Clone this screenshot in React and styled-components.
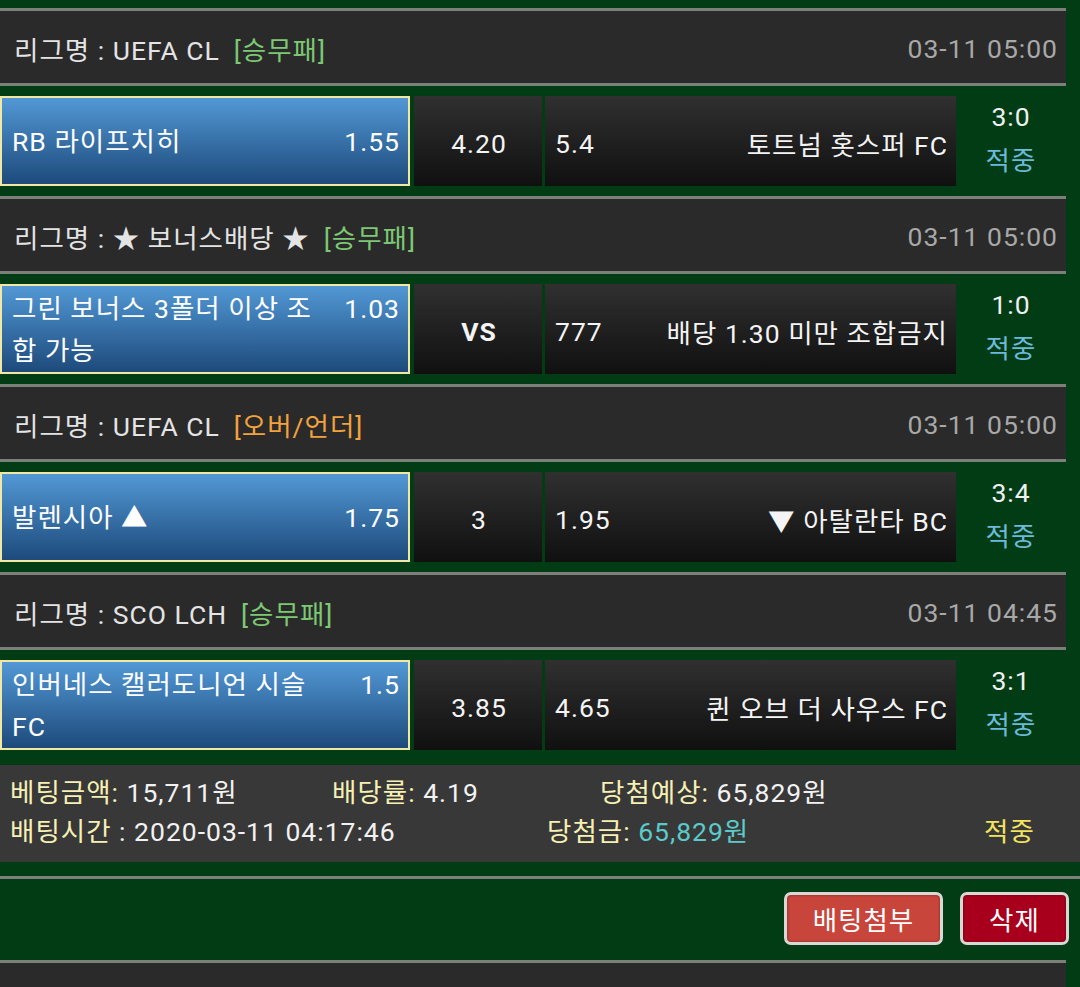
import React from 'react';
import styled, {createGlobalStyle} from 'styled-components';

const GlobalStyle = createGlobalStyle`
    html, body {
        margin: 0;
        padding: 0;
        background: #013c15;
    }
    body {
        font-family: Roboto, "Noto Sans CJK KR", sans-serif;
        font-size: 26.5px;
        letter-spacing: 1px;
        color: #f2f2f2;
    }
`;

const Page = styled.div`
    width: 1080px;
    padding-top: 8px;
`;

const Card = styled.div`
    width: 1066px;
`;

const Header = styled.div`
    display: flex;
    align-items: center;
    justify-content: space-between;
    box-sizing: border-box;
    height: 78px;
    padding: 2px 8px 0 14px;
    background: #2a2a2a;
    border-top: 3px solid #7b807b;
    border-bottom: 3px solid #7b807b;
    color: #e4e4e4;
`;

const BetType = styled.span`
    margin-left: 14px;
    color: ${p => (p.$over ? '#f2a23c' : '#7cc873')};
`;

const Time = styled.span`
    color: #a8a8a8;
`;

const Row = styled.div`
    display: flex;
    height: 90px;
    margin: 10px 0;
`;

const Home = styled.div`
    box-sizing: border-box;
    width: 410px;
    display: flex;
    align-items: center;
    padding: 2px 8px 0 10px;
    border: 2px solid #f2e8a6;
    background: linear-gradient(to bottom, #5298d5, #1d4a7b);
    color: #fff;
`;

const HomeInner = styled.div`
    display: flex;
    align-items: flex-start;
    justify-content: space-between;
    width: 100%;
    line-height: 42px;
`;

const Name = styled.span`
    width: 316px;
`;

const Cell = styled.div`
    box-sizing: border-box;
    width: ${p => p.$w}px;
    margin-left: ${p => p.$gap}px;
    display: flex;
    align-items: center;
    justify-content: ${p => p.$justify || 'center'};
    padding: 4px 8px 0 10px;
    background: linear-gradient(to bottom, #303030, #101010);
    color: #f4f4f4;
    font-weight: ${p => (p.$bold ? 700 : 400)};
`;

const Result = styled.div`
    width: 110px;
    display: flex;
    flex-direction: column;
    align-items: center;
    justify-content: center;
    line-height: 41px;
    padding-bottom: 6px;
    color: #f0f0f0;
`;

const Score = styled.span`
    margin-bottom: 3px;
`;

const Hit = styled.span`
    color: #6bbadb;
`;

const Summary = styled.div`
    margin-top: 15px;
    padding: 8px 10px 11px;
    background: #383838;
    line-height: 39px;
`;

const SummaryRow = styled.div`
    display: flex;
`;

const Item = styled.span`
    width: ${p => (p.$w ? `${p.$w}px` : 'auto')};
    white-space: nowrap;
`;

const Label = styled.span`
    color: #f6f0b4;
`;

const Amount = styled.span`
    color: #5ccaca;
`;

const Status = styled.span`
    color: #f2e45e;
`;

const Actions = styled.div`
    display: flex;
    justify-content: flex-end;
    gap: 17px;
    margin-top: 14px;
    padding: 13px 11px 15px 0;
    border-top: 3px solid #7b807b;
`;

const Button = styled.button`
    width: ${p => p.$w}px;
    height: 53px;
    padding: 0;
    border: 3px solid #d8d8d4;
    border-radius: 7px;
    background: ${p => (p.$danger ? '#a8001c' : '#c8453c')};
    color: #fff;
    font-family: Roboto, "Noto Sans CJK KR", sans-serif;
    font-size: 26.5px;
    letter-spacing: 1px;
    box-shadow: inset 0 0 3px rgba(0, 0, 0, 0.4);
`;

const NextCard = styled.div`
    width: 1066px;
    height: 24px;
    background: #2a2a2a;
    border-top: 3px solid #7b807b;
`;

const matches = [
    {league: 'UEFA CL', type: '[승무패]', time: '03-11 05:00', home: 'RB 라이프치히', homeOdds: '1.55',
        mid: '4.20', awayOdds: '5.4', away: '토트넘 홋스퍼 FC', score: '3:0'},
    {league: '★ 보너스배당 ★', type: '[승무패]', time: '03-11 05:00', home: '그린 보너스 3폴더 이상 조합 가능', homeOdds: '1.03',
        mid: 'VS', bold: true, awayOdds: '777', away: '배당 1.30 미만 조합금지', score: '1:0'},
    {league: 'UEFA CL', type: '[오버/언더]', over: true, time: '03-11 05:00', home: '발렌시아 ▲', homeOdds: '1.75',
        mid: '3', awayOdds: '1.95', away: '▼ 아탈란타 BC', score: '3:4'},
    {league: 'SCO LCH', type: '[승무패]', time: '03-11 04:45', home: '인버네스 캘러도니언 시슬 FC', homeOdds: '1.5',
        mid: '3.85', awayOdds: '4.65', away: '퀸 오브 더 사우스 FC', score: '3:1'},
];

const App = () => {
    return (
        <Page>
            <GlobalStyle />
            <Card>
                {matches.map((m, i) => (
                    <div key={i}>
                        <Header>
                            <span>
                                리그명 : {m.league}
                                <BetType $over={m.over}>{m.type}</BetType>
                            </span>
                            <Time>{m.time}</Time>
                        </Header>
                        <Row>
                            <Home>
                                <HomeInner>
                                    <Name>{m.home}</Name>
                                    <span>{m.homeOdds}</span>
                                </HomeInner>
                            </Home>
                            <Cell $w={128} $gap={4} $bold={m.bold}>{m.mid}</Cell>
                            <Cell $w={411} $gap={3} $justify="space-between">
                                <span>{m.awayOdds}</span>
                                <span>{m.away}</span>
                            </Cell>
                            <Result>
                                <Score>{m.score}</Score>
                                <Hit>적중</Hit>
                            </Result>
                        </Row>
                    </div>
                ))}
            </Card>
            <Summary>
                <SummaryRow>
                    <Item $w={322}><Label>베팅금액:</Label> 15,711원</Item>
                    <Item $w={268}><Label>배당률:</Label> 4.19</Item>
                    <Item><Label>당첨예상:</Label> 65,829원</Item>
                </SummaryRow>
                <SummaryRow>
                    <Item $w={537}><Label>배팅시간</Label> : 2020-03-11 04:17:46</Item>
                    <Item $w={437}><Label>당첨금:</Label> <Amount>65,829원</Amount></Item>
                    <Item><Status>적중</Status></Item>
                </SummaryRow>
            </Summary>
            <Actions>
                <Button $w={159}>배팅첨부</Button>
                <Button $w={109} $danger>삭제</Button>
            </Actions>
            <NextCard />
        </Page>
    );
};

export default App;
